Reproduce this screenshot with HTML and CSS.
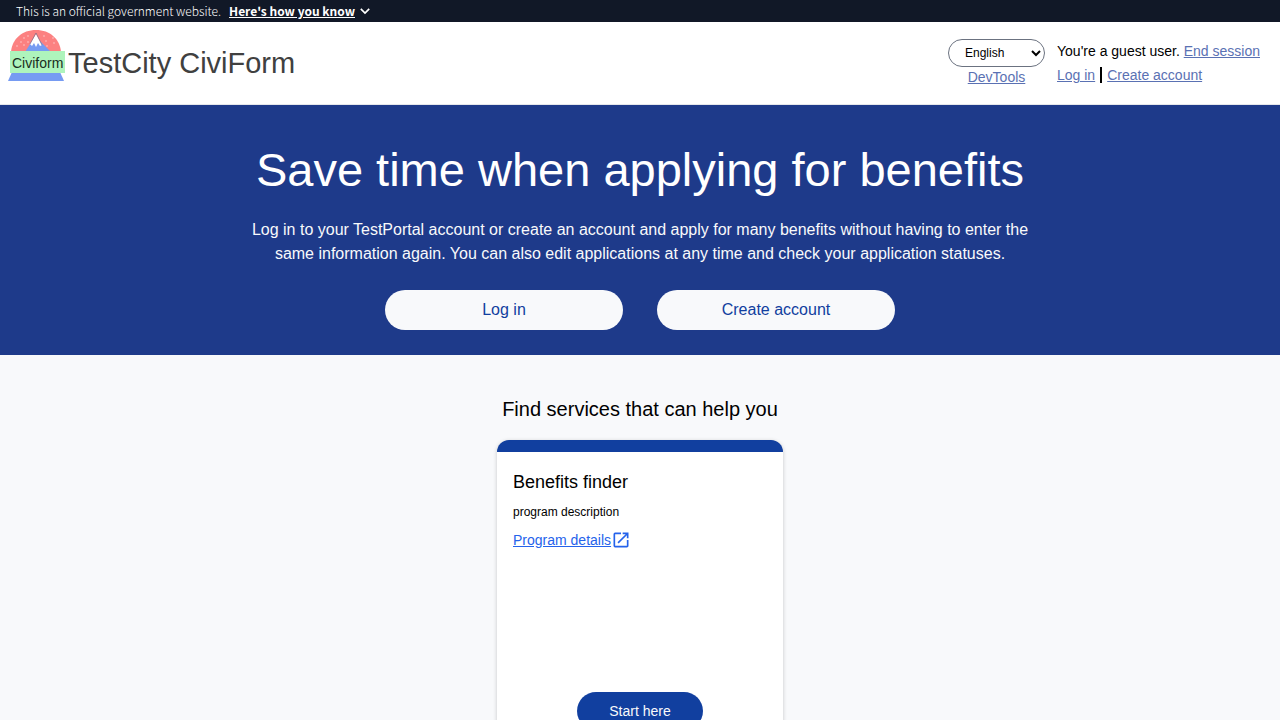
FILE: index.html
```html
<!DOCTYPE html>
<html lang="en">
<head>
<meta charset="utf-8">
<meta name="viewport" content="width=device-width, initial-scale=1">
<title>TestCity CiviForm</title>
<link rel="stylesheet" href="styles.css">
</head>
<body>
<aside class="gov-banner">
  <span>This is an official government website.</span>
  <button type="button" class="gov-toggle"><span class="gov-toggle-text">Here's how you know</span><svg class="chevron" viewBox="0 0 10 10" aria-hidden="true"><path d="M1.5 3.2 5 6.7 8.5 3.2" fill="none" stroke="currentColor" stroke-width="1.4"/></svg></button>
</aside>
<header class="site-header">
  <div class="brand">
    <svg class="logo" viewBox="0 0 60 54" role="img" aria-label="Civiform">
      <path d="M3 22C4 9 14 0 28 0S52 9 53 22z" fill="#fc8181"/>
      <path d="M17 22 24 11h8l11 11z" fill="#769bf2"/>
      <path d="M22 14 28 4l6 11-2 1-2-3-2 4-2-4-2 3z" fill="#fff"/>
      <path d="M22 14 28 3l6 12" fill="none" stroke="#786d86" stroke-width=".7"/>
      <g fill="#fed7d7"><circle cx="16" cy="8" r=".7"/><circle cx="20" cy="6" r=".7"/><circle cx="13" cy="12" r=".7"/><circle cx="20" cy="12" r=".7"/><circle cx="9" cy="16" r=".7"/><circle cx="16" cy="15" r=".7"/><circle cx="36" cy="6" r=".7"/><circle cx="38" cy="11" r=".7"/><circle cx="45" cy="8" r=".7"/><circle cx="39" cy="16" r=".7"/><circle cx="46" cy="13" r=".7"/></g>
      <path d="M4 42h48l4 9H0z" fill="#769bf2"/>
      <path d="M2 21h55v22H2z" fill="#aef4bc"/>
      <text x="4" y="38" class="logo-text">Civiform</text>
    </svg>
    <span class="brand-name">TestCity CiviForm</span>
  </div>
  <div class="tools">
    <div class="lang">
      <select class="lang-select" aria-label="Language"><option>English</option></select>
      <a href="#" class="link">DevTools</a>
    </div>
    <div class="account">
      <div>You're a guest user. <a href="#" class="link">End session</a></div>
      <div class="account-links"><a href="#" class="link">Log in</a><a href="#" class="link account-create">Create account</a></div>
    </div>
  </div>
</header>
<main>
  <section class="hero">
    <h1 class="hero-title">Save time when applying for benefits</h1>
    <p class="hero-text">Log in to your TestPortal account or create an account and apply for many benefits without having to enter the same information again. You can also edit applications at any time and check your application statuses.</p>
    <div class="hero-actions">
      <button type="button" class="hero-button">Log in</button>
      <button type="button" class="hero-button">Create account</button>
    </div>
  </section>
  <section class="services">
    <h2 class="services-title">Find services that can help you</h2>
    <article class="card">
      <div class="card-body">
        <h3 class="card-title">Benefits finder</h3>
        <p class="card-text">program description</p>
        <a href="#" class="card-link">Program details<svg class="open-icon" viewBox="0 0 24 24" aria-hidden="true"><path fill="currentColor" d="M19 19H5V5h7V3H5a2 2 0 0 0-2 2v14a2 2 0 0 0 2 2h14c1.1 0 2-.9 2-2v-7h-2v7zM14 3v2h3.59l-9.83 9.83 1.41 1.41L19 6.41V10h2V3h-7z"/></svg></a>
      </div>
      <button type="button" class="start-button">Start here</button>
    </article>
  </section>
</main>
</body>
</html>
```
FILE: styles.css
```css
*, *::before, *::after { box-sizing: border-box; }
body {
  margin: 0;
  background: #f8f9fb;
  color: #000;
  font: 16px/24px "Liberation Sans", Arial, sans-serif;
}
h1, h2, h3, p { margin: 0; font-weight: 400; }
button { font: inherit; cursor: pointer; }

.gov-banner {
  display: flex;
  gap: 8px;
  padding: 3px 16px;
  background: #111827;
  color: #fff;
  font: 300 12px/16px "Noto Sans CJK SC", "Noto Sans", sans-serif;
}
.gov-toggle {
  display: flex;
  align-items: center;
  gap: 4px;
  padding: 0;
  border: 0;
  background: none;
  color: inherit;
  font-weight: 700;
}
.gov-toggle-text { text-decoration: underline; }
.chevron { width: 12px; height: 12px; }

.site-header {
  display: flex;
  justify-content: space-between;
  padding: 8px 20px 17px 8px;
  border-bottom: 1px solid #e5e7eb;
  background: #fff;
}
.brand { display: flex; align-items: flex-start; }
.logo { width: 60px; height: 54px; }
.logo-text { font: 14px "Liberation Sans", Arial, sans-serif; fill: #1a2e22; }
.brand-name { padding-top: 15px; color: #404040; font-size: 29px; line-height: 36px; }
.tools { display: flex; gap: 12px; padding-top: 9px; font-size: 14px; }
.lang { display: flex; flex-direction: column; align-items: center; line-height: 20px; }
.lang-select {
  width: 97px;
  height: 28px;
  padding: 0 0 0 12px;
  border: 1px solid #6b7280;
  border-radius: 14px;
  background: #fff;
  color: #000;
  font: 12px/16px "Liberation Sans", Arial, sans-serif;
}
.link { color: #5a71b3; }
.account-links { display: flex; align-items: center; line-height: 16px; padding: 4px 0; }
.account-create { margin-left: 5px; padding-left: 5px; border-left: 2px solid #000; }

.hero {
  display: flex;
  flex-direction: column;
  align-items: center;
  padding: 40px 24px 25px;
  background: #1e3a8a;
  color: #f8f9fb;
  text-align: center;
}
.hero-title { color: #fff; font-size: 47px; line-height: 49px; }
.hero-text { max-width: 784px; margin: 24px 0; }
.hero-actions { display: flex; gap: 34px; }
.hero-button {
  width: 238px;
  height: 40px;
  border: 0;
  border-radius: 20px;
  background: #f8f9fb;
  color: #113f9f;
}

.services { display: flex; flex-direction: column; align-items: center; padding: 40px 24px; }
.services-title { font-size: 20px; line-height: 28px; margin-bottom: 17px; }
.card {
  display: flex;
  flex-direction: column;
  align-items: center;
  width: 286px;
  min-height: 314px;
  padding-bottom: 24px;
  border-top: 12px solid #113f9f;
  border-radius: 12px;
  background: #fff;
  box-shadow: 0 1px 4px rgba(0, 0, 0, .2);
}
.card-body { align-self: stretch; padding: 16px; }
.card-title { font-size: 18px; line-height: 28px; }
.card-text { margin: 8px 0; font-size: 12px; line-height: 16px; }
.card-link { display: inline-flex; align-items: center; color: #2563eb; font-size: 14px; line-height: 24px; }
.open-icon { width: 20px; height: 20px; }
.start-button {
  width: 126px;
  height: 38px;
  margin-top: auto;
  border: 0;
  border-radius: 19px;
  background: #113f9f;
  color: #f8f9fb;
  font-size: 14px;
}
```
